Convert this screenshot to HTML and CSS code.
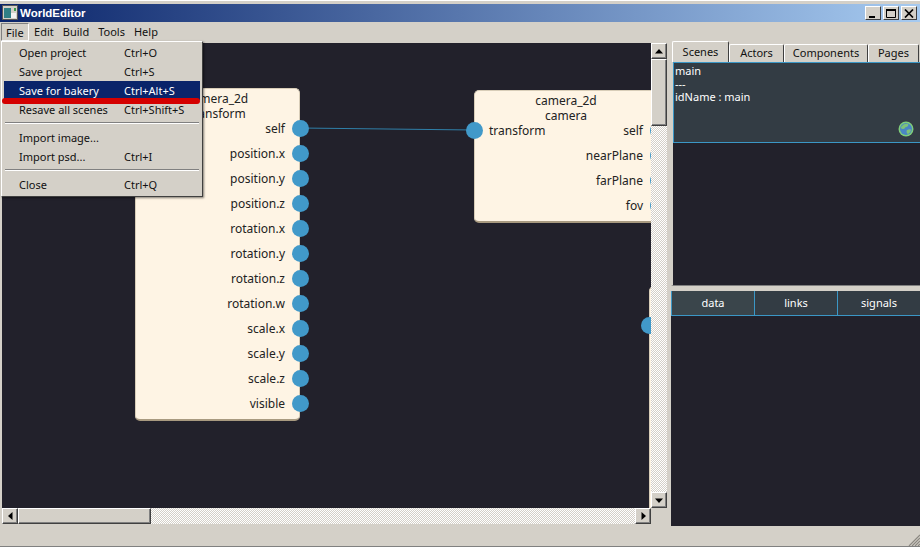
FILE: index.html
```html
<!DOCTYPE html>
<html lang="en">
<head>
    <meta charset="UTF-8">
    <meta name="viewport" content="width=device-width, initial-scale=1.0">
    <title>WorldEditor</title>
    <link rel="stylesheet" href="styles.css">
</head>
<body>

<header class="titlebar">
    <svg class="app-icon" width="16" height="16" viewBox="0 0 16 16">
        <rect x="0.5" y="0.5" width="15" height="14" fill="#d4d0c8" stroke="#555"/>
        <rect x="2" y="3" width="7" height="10" fill="#2f7f86"/>
        <rect x="9" y="8" width="5" height="5" fill="#f2f2f2"/>
        <rect x="12" y="3" width="2" height="3" fill="#3c9c4c"/>
    </svg>
    <span class="title-text">WorldEditor</span>
    <div class="win-buttons">
        <button class="win-btn"><svg width="10" height="9" viewBox="0 0 10 9"><rect x="1" y="7" width="6" height="2" fill="#000"/></svg></button>
        <button class="win-btn"><svg width="10" height="9" viewBox="0 0 10 9"><path d="M0.5 1.5h9v7h-9z" fill="none" stroke="#000"/><rect y="0" width="10" height="2" fill="#000"/></svg></button>
        <button class="win-btn win-close"><svg width="10" height="9" viewBox="0 0 10 9"><path d="M1 0.5l8 8M9 0.5l-8 8" stroke="#000" stroke-width="1.7" fill="none"/></svg></button>
    </div>
</header>

<nav class="menubar">
    <span class="menu-title open">File</span>
    <span class="menu-title">Edit</span>
    <span class="menu-title">Build</span>
    <span class="menu-title">Tools</span>
    <span class="menu-title">Help</span>
</nav>

<main class="workspace">
    <section class="graph-area">
        <div class="canvas">
            <svg class="wires" width="650" height="466">
                <path d="M298 85 L472 87" stroke="#2f7fa8" stroke-width="1" fill="none"/>
            </svg>

            <div class="node node-transform">
                <div class="node-title">camera_2d</div>
                <div class="node-title">transform</div>
                <div class="port-row"><span>self</span><i class="port port-out"></i></div>
                <div class="port-row"><span>position.x</span><i class="port port-out"></i></div>
                <div class="port-row"><span>position.y</span><i class="port port-out"></i></div>
                <div class="port-row"><span>position.z</span><i class="port port-out"></i></div>
                <div class="port-row"><span>rotation.x</span><i class="port port-out"></i></div>
                <div class="port-row"><span>rotation.y</span><i class="port port-out"></i></div>
                <div class="port-row"><span>rotation.z</span><i class="port port-out"></i></div>
                <div class="port-row"><span>rotation.w</span><i class="port port-out"></i></div>
                <div class="port-row"><span>scale.x</span><i class="port port-out"></i></div>
                <div class="port-row"><span>scale.y</span><i class="port port-out"></i></div>
                <div class="port-row"><span>scale.z</span><i class="port port-out"></i></div>
                <div class="port-row"><span>visible</span><i class="port port-out"></i></div>
            </div>

            <div class="node node-camera">
                <div class="node-title">camera_2d</div>
                <div class="node-title">camera</div>
                <div class="port-row port-row-both"><i class="port port-in"></i><span class="port-left">transform</span><span>self</span><i class="port port-out"></i></div>
                <div class="port-row"><span>nearPlane</span><i class="port port-out"></i></div>
                <div class="port-row"><span>farPlane</span><i class="port port-out"></i></div>
                <div class="port-row"><span>fov</span><i class="port port-out"></i></div>
            </div>

            <div class="node node-third"><i class="port port-in"></i></div>
        </div>

        <div class="scrollbar vscroll">
            <button class="arrow"><svg width="8" height="5" viewBox="0 0 8 5"><path d="M4 0L8 4.500H0z" fill="#000"/></svg></button>
            <div class="thumb vthumb"></div>
            <div class="track"></div>
            <button class="arrow"><svg width="8" height="5" viewBox="0 0 8 5"><path d="M4 5L0 0.500H8z" fill="#000"/></svg></button>
        </div>

        <div class="scrollbar hscroll">
            <button class="arrow"><svg width="5" height="8" viewBox="0 0 5 8"><path d="M0 4L4.500 0V8z" fill="#000"/></svg></button>
            <div class="thumb hthumb"></div>
            <div class="track"></div>
            <button class="arrow"><svg width="5" height="8" viewBox="0 0 5 8"><path d="M5 4L0.500 0V8z" fill="#000"/></svg></button>
        </div>
    </section>

    <aside class="side">
        <div class="tabs">
            <span class="tab active tab-scenes">Scenes</span>
            <span class="tab tab-actors">Actors</span>
            <span class="tab tab-components">Components</span>
            <span class="tab tab-pages">Pages</span>
        </div>
        <div class="scene-list">
            <div class="scene-item">
                <div>main</div>
                <div>---</div>
                <div>idName : main</div>
                <svg class="globe" width="16" height="16" viewBox="0 0 16 16">
                    <circle cx="8" cy="8" r="7.5" fill="#7fce7a"/>
                    <circle cx="8" cy="8" r="6" fill="#4a86c4"/>
                    <path d="M3 6c2-3 5-4 7-3 1 2-1 3-2 3s-1 2-3 2-2-1-2-2zM9 9c2-1 4-1 4 0s-2 4-3 4-2-3-1-4z" fill="#7ec27a"/>
                </svg>
            </div>
        </div>
        <div class="splitter"></div>
        <div class="prop-tabs">
            <span class="prop-tab">data</span>
            <span class="prop-tab">links</span>
            <span class="prop-tab">signals</span>
        </div>
        <div class="prop-body"></div>
    </aside>
</main>

<footer class="statusbar">
    <svg class="grip" width="12" height="12" viewBox="0 0 12 12">
        <path d="M12 1L1 12M12 4L4 12M12 7L7 12M12 10L10 12" stroke="#8a8780" stroke-width="1.200" fill="none"/>
    </svg>
</footer>

<div class="file-menu">
    <div class="menu-item"><span>Open project</span><span>Ctrl+O</span></div>
    <div class="menu-item"><span>Save project</span><span>Ctrl+S</span></div>
    <div class="menu-item selected"><span>Save for bakery</span><span>Ctrl+Alt+S</span></div>
    <div class="menu-item"><span>Resave all scenes</span><span>Ctrl+Shift+S</span></div>
    <div class="menu-sep"></div>
    <div class="menu-item"><span>Import image...</span><span></span></div>
    <div class="menu-item"><span>Import psd...</span><span>Ctrl+I</span></div>
    <div class="menu-sep"></div>
    <div class="menu-item"><span>Close</span><span>Ctrl+Q</span></div>
    <div class="red-mark"></div>
</div>

</body>
</html>
```

FILE: styles.css
```css
html, body {
    margin: 0;
    padding: 0;
}

body {
    width: 920px;
    height: 547px;
    overflow: hidden;
    position: relative;
    display: flex;
    flex-direction: column;
    background-color: #d4d0c8;
    font-family: 'Noto Sans', sans-serif;
    font-size: 11px;
    color: #111;
    box-sizing: border-box;
    padding-top: 4px;
    border-top: 1px solid #fff;
    border-bottom: 1px solid #808080;
}

.titlebar {
    height: 18px;
    flex: none;
    display: flex;
    align-items: center;
    margin-top: -1px;
    padding: 0 2px;
    background: linear-gradient(to right, #0a246a, #a6caf0);
}

.app-icon {
    margin-right: 2px;
}

.title-text {
    color: #fff;
    font-weight: bold;
    font-family: 'Liberation Sans', sans-serif;
    font-size: 11.5px;
}

.win-buttons {
    margin-left: auto;
    display: flex;
    gap: 2px;
    margin-right: 1px;
}

.win-btn {
    width: 16px;
    height: 14px;
    padding: 0;
    display: flex;
    align-items: center;
    justify-content: center;
    background-color: #d4d0c8;
    border: 1px solid;
    border-color: #fff #404040 #404040 #fff;
}

.menubar {
    height: 19px;
    flex: none;
    display: flex;
    align-items: center;
    padding-left: 1px;
}

.menu-title {
    padding: 0 4.500px;
    height: 18px;
    line-height: 18px;
    box-sizing: border-box;
}

.menu-title.open {
    padding: 0 4px;
    margin-right: 1px;
    border: 1px solid;
    border-color: #808080 #fff #fff #808080;
    line-height: 17px;
}

.workspace {
    flex: 1;
    display: flex;
    min-height: 0;
    margin-top: 1px;
}

.graph-area {
    width: 671px;
    height: 483px;
    flex: none;
    box-sizing: border-box;
    padding: 1px 4px 0 2px;
    display: grid;
    grid-template-columns: 1fr 16px;
    grid-template-rows: 465px 16px;
    align-content: start;
}

.canvas {
    position: relative;
    overflow: hidden;
    background-color: #22212b;
}

.wires {
    position: absolute;
    left: 0;
    top: 0;
}

.node {
    position: absolute;
    box-sizing: border-box;
    background-color: #fef4e4;
    border: 1px solid #d8cdb8;
    border-bottom: 2px solid #a89a80;
    border-radius: 5px;
    color: #222;
    font-size: 12px;
}

.node-transform {
    left: 133px;
    top: 45px;
    width: 165px;
    height: 333px;
    padding-top: 2px;
}

.node-camera {
    left: 472px;
    top: 47px;
    width: 184px;
    height: 133px;
    padding-top: 2px;
}

.node-third {
    left: 647px;
    top: 243px;
    width: 200px;
    height: 300px;
}

.node-title {
    height: 15px;
    line-height: 15px;
    text-align: center;
}

.port-row {
    position: relative;
    height: 25px;
    line-height: 25px;
    text-align: right;
    padding-right: 14px;
}

.node-title + .port-row {
    margin-top: -5px;
}

.port-row-both {
    display: flex;
    justify-content: space-between;
}

.port-left {
    padding-left: 14px;
}

.port {
    position: absolute;
    width: 17px;
    height: 17px;
    top: 4px;
    border-radius: 50%;
    background-color: #4199c9;
}

.port-out {
    right: -10px;
}

.port-in {
    left: -9px;
}

.node-third .port-in {
    top: 30px;
}

.scrollbar {
    display: flex;
    background-color: #fff;
    background-image: conic-gradient(#d4d0c8 25%, #fff 0 50%, #d4d0c8 0 75%, #fff 0);
    background-size: 2px 2px;
}

.vscroll {
    flex-direction: column;
    width: 16px;
}

.hscroll {
    height: 16px;
    grid-column: 1;
}

.arrow, .thumb {
    flex: none;
    box-sizing: border-box;
    padding: 0;
    display: flex;
    align-items: center;
    justify-content: center;
    background-color: #d4d0c8;
    border: 1px solid;
    border-color: #fff #404040 #404040 #fff;
    box-shadow: inset -1px -1px 0 #808080;
}

.arrow {
    width: 16px;
    height: 16px;
}

.track {
    flex: 1;
}

.vthumb {
    width: 16px;
    height: 67px;
}

.hthumb {
    width: 133px;
    height: 16px;
}

.side {
    flex: 1;
    display: flex;
    flex-direction: column;
    min-width: 0;
}

.tabs {
    height: 21px;
    margin-top: -1px;
    flex: none;
    display: flex;
    align-items: flex-end;
    padding-left: 1px;
}

.tab {
    box-sizing: border-box;
    height: 18px;
    line-height: 16px;
    text-align: center;
    border: 1px solid;
    border-bottom: none;
    border-color: #fff #404040 transparent #fff;
    border-radius: 2px 2px 0 0;
}

.tab.active {
    height: 21px;
    line-height: 19px;
}

.tab-scenes { width: 57px; }
.tab-actors { width: 55px; }
.tab-components { width: 84px; }
.tab-pages { width: 51px; }

.scene-list {
    height: 224px;
    flex: none;
    box-sizing: border-box;
    background-color: #22212b;
    border-left: 2px solid #d4d0c8;
    border-bottom: 1px solid #808080;
}

.scene-item {
    position: relative;
    height: 81px;
    box-sizing: border-box;
    padding: 1px 1px;
    background-color: #333c44;
    border: 1px solid #3b97c6;
    border-width: 1px 0 1px 1px;
    color: #fff;
    line-height: 13px;
}

.globe {
    position: absolute;
    right: 6px;
    bottom: 5px;
}

.splitter {
    height: 5px;
    flex: none;
}

.prop-tabs {
    flex: none;
    display: grid;
    grid-template-columns: 83px 83px 1fr;
    background-color: #333c44;
    border-bottom: 1px solid #3b97c6;
    height: 24px;
}

.prop-tab {
    line-height: 24px;
    text-align: center;
    color: #fff;
    border-left: 1px solid #3b97c6;
}

.prop-tab:first-child {
    background-color: #3a454b;
}

.prop-body {
    height: 210px;
    flex: none;
    background-color: #22212b;
}

.statusbar {
    flex: 1;
    min-height: 0;
    position: relative;
}

.grip {
    position: absolute;
    right: 0;
    bottom: 0;
}

.file-menu {
    position: absolute;
    left: 1px;
    top: 40px;
    width: 202px;
    box-sizing: border-box;
    padding: 1px 2px 2px;
    background-color: #d4d0c8;
    border: 1px solid;
    border-color: #fff #404040 #404040 #fff;
    box-shadow: 1px 1px 2px rgba(0, 0, 0, 0.5);
}

.menu-item {
    height: 19px;
    line-height: 19px;
    display: grid;
    grid-template-columns: 105px 1fr;
    padding-left: 15px;
}

.menu-item.selected {
    background-color: #0a246a;
    color: #fff;
}

.menu-sep {
    margin: 3px 1px 4px;
    background-color: #808080;
    border-bottom: 1px solid #fff;
    height: 1px;
}

.red-mark {
    position: absolute;
    left: 0;
    top: 56px;
    width: 198px;
    height: 6px;
    border-radius: 3px;
    background-color: #d40000;
}
```
